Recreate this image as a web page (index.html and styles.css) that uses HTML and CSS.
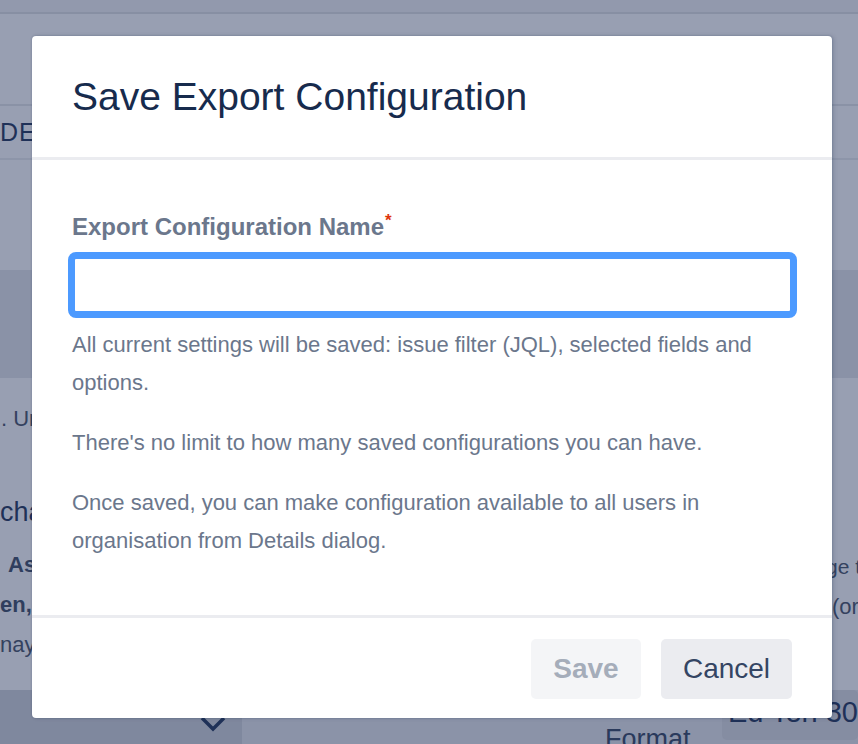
FILE: index.html
```html
<!DOCTYPE html>
<html lang="en">
<head>
<meta charset="utf-8">
<title>Save Export Configuration</title>
<link rel="stylesheet" href="styles.css">
</head>
<body>
<div class="page">
  <div class="topbar"></div>
  <div class="hero"></div>
  <div class="tabs"><span class="tab-text">DE</span></div>
  <div class="gap-band"></div>
  <div class="dark-band"></div>
  <div class="content">
    <div class="side side-left">
      <div class="bg-line l1">. Un</div>
      <div class="bg-line head">cha</div>
      <div class="bg-line bold l3">As</div>
      <div class="bg-line bold l4">en,</div>
      <div class="bg-line l5">nay</div>
    </div>
    <div class="side side-right">
      <div class="bg-line r1">ge to</div>
      <div class="bg-line r2">(or</div>
    </div>
  </div>
  <div class="bottom">
    <div class="select-block">
      <svg class="chevron" width="26" height="16" viewBox="0 0 26 16"><path d="M2 2 L13 13 L24 2" fill="none" stroke="#1f3158" stroke-width="3.5"/></svg>
    </div>
    <div class="format">Format</div>
    <div class="date-box">Ed Ten 30</div>
  </div>
</div>

<div class="modal" role="dialog">
  <div class="modal-header">
    <h1 class="modal-title">Save Export Configuration</h1>
  </div>
  <div class="modal-body">
    <label class="field-label">Export Configuration Name<span class="req">*</span></label>
    <input class="field-input" type="text">
    <p class="help">All current settings will be saved: issue filter (JQL), selected fields and options.</p>
    <p class="help">There's no limit to how many saved configurations you can have.</p>
    <p class="help">Once saved, you can make configuration available to all users in organisation from Details dialog.</p>
  </div>
  <div class="modal-footer">
    <button class="btn btn-save" disabled>Save</button>
    <button class="btn btn-cancel">Cancel</button>
  </div>
</div>
</body>
</html>
```
FILE: styles.css
```css
* { box-sizing: border-box; }
html, body { margin: 0; padding: 0; }
body {
  width: 858px;
  height: 744px;
  overflow: hidden;
  font-family: "Liberation Sans", Arial, sans-serif;
  background: #989fb2;
  position: relative;
}
.page {
  display: flex;
  flex-direction: column;
  height: 744px;
}
.page > div { flex-shrink: 0; }
.topbar {
  height: 14px;
  background: #9299ad;
  border-bottom: 2px solid #878fa3;
}
.hero {
  height: 92px;
  background: #989fb2;
  border-bottom: 2px solid #8a92a6;
}
.tabs {
  height: 54px;
  background: #989fb2;
  border-bottom: 2px solid #8d95a9;
  display: flex;
  align-items: center;
  overflow: hidden;
}
.tab-text {
  font-size: 25px;
  color: #1f3158;
  letter-spacing: 1px;
}
.gap-band {
  height: 110px;
  background: #989fb2;
}
.dark-band {
  height: 108px;
  background: #8a92a7;
}
.content {
  height: 312px;
  background: #989fb2;
  display: flex;
  justify-content: space-between;
}
.side {
  display: flex;
  flex-direction: column;
  overflow: hidden;
  white-space: nowrap;
}
.side-left {
  width: 50px;
  padding-top: 21px;
}
.side-right {
  width: 32px;
  padding-top: 169px;
}
.bg-line {
  font-size: 22px;
  line-height: 40px;
  color: #34425f;
}
.l1 { margin-left: 1px; }
.head {
  font-size: 27px;
  color: #1f3158;
  margin-top: 52px;
  line-height: 42px;
}
.bold { font-weight: bold; color: #2f3e5e; }
.l3 { margin-top: 12px; margin-left: 8px; }
.r1 { font-size: 21px; }
.r2 { margin-left: 6px; }
.bottom {
  height: 54px;
  overflow: hidden;
  display: flex;
  align-items: flex-start;
  background: #8b93a8;
}
.select-block {
  width: 242px;
  height: 54px;
  flex-shrink: 0;
  background: #7f889e;
  display: flex;
  justify-content: flex-end;
  align-items: flex-end;
  padding: 0 16px 12px 0;
}
.format {
  font-size: 27px;
  line-height: 31px;
  color: #2a3a5c;
  margin-left: 363px;
  margin-top: 34px;
}
.date-box {
  margin-left: auto;
  width: 136px;
  height: 50px;
  flex-shrink: 0;
  background: #858da2;
  border-radius: 5px;
  font-size: 29px;
  color: #1f3158;
  padding-top: 6px;
  text-align: right;
  white-space: nowrap;
  overflow: hidden;
}

/* Modal */
.modal {
  position: absolute;
  left: 32px;
  top: 36px;
  width: 800px;
  height: 682px;
  background: #ffffff;
  border-radius: 4px;
  box-shadow: 0 0 2px rgba(9, 30, 66, 0.25), 2px 0 4px rgba(9, 30, 66, 0.15);
  display: flex;
  flex-direction: column;
}
.modal-header {
  height: 124px;
  display: flex;
  align-items: center;
  padding: 0 40px;
  border-bottom: 3px solid #ebecf0;
  flex-shrink: 0;
}
.modal-title {
  margin: 0;
  font-size: 39px;
  font-weight: normal;
  color: #172b4d;
  line-height: 46px;
}
.modal-body {
  padding: 52px 40px 0 40px;
  display: flex;
  flex-direction: column;
  height: 458px;
  flex-shrink: 0;
  border-bottom: 3px solid #ebecf0;
}
.field-label {
  font-size: 24px;
  line-height: 30px;
  font-weight: bold;
  color: #6b778c;
}
.req {
  color: #de350b;
  font-size: 17px;
  vertical-align: top;
  position: relative;
  top: -6px;
  margin-left: 1px;
}
.field-input {
  display: block;
  margin: 10px -5px 0 -4px;
  height: 66px;
  flex-shrink: 0;
  border: 7px solid #4c9aff;
  border-radius: 8px;
  background: #ffffff;
  outline: none;
  font-family: inherit;
  font-size: 20px;
}
.help {
  margin: 8px 0 0 0;
  font-size: 22px;
  line-height: 38px;
  color: #6b778c;
}
.help + .help { margin-top: 22px; }
.modal-footer {
  flex: 1;
  display: flex;
  justify-content: flex-end;
  align-items: flex-start;
  gap: 20px;
  padding: 21px 40px 0 0;
}
.btn {
  height: 60px;
  border: none;
  border-radius: 5px;
  font-family: inherit;
  font-size: 28px;
  padding: 0;
}
.btn-save {
  width: 110px;
  background: #f4f5f7;
  color: #a5adba;
  font-weight: bold;
}
.btn-cancel {
  width: 131px;
  background: #ebecf0;
  color: #344563;
}
```
